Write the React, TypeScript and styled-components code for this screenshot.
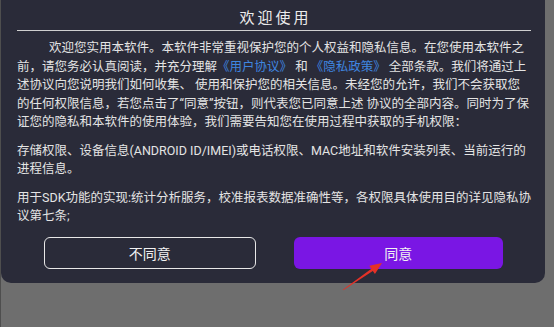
import React from "react";
import styled, { createGlobalStyle } from "styled-components";

const Global = createGlobalStyle`
  html, body { margin: 0; padding: 0; background: #6e6e6e; }
  body {
    width: 554px;
    height: 327px;
    overflow: hidden;
    font-family: Roboto, "Noto Sans CJK SC", sans-serif;
  }
`;

const Stage = styled.div`
  position: relative;
  width: 554px;
  height: 327px;
  box-sizing: border-box;
  padding-left: 1px;
  background: #6e6e6e;
  border-left: 1px solid #4e4e4e;
`;

const Dialog = styled.div`
  width: 544px;
  height: 283px;
  margin-left: -1px;
  box-sizing: border-box;
  background: #2a2b39;
  border-radius: 0 0 10px 10px;
  padding: 0 14px 14px 16px;
  display: flex;
  flex-direction: column;
`;

const Header = styled.div`
  height: 31px;
  padding-top: 2px;
  box-sizing: border-box;
  border-bottom: 1px solid #cfcfcf;
  display: flex;
  align-items: center;
  justify-content: center;
`;

const Title = styled.h1`
  margin: 0;
  padding-left: 3px;
  font-size: 15px;
  font-weight: 400;
  letter-spacing: 3px;
  color: #ececec;
`;

const Body = styled.div`
  padding-top: 8px;
  display: flex;
  flex-direction: column;
  gap: 10px;
`;

const Para = styled.p<{ $indent?: boolean }>`
  margin: 0;
  font-size: 12.5px;
  line-height: 18.5px;
  color: #e4e4e4;
  white-space: nowrap;
  text-indent: ${(p) => (p.$indent ? "32px" : "0")};
`;

const Link = styled.span`
  color: #3f86e0;
`;

const Actions = styled.div`
  margin-top: auto;
  padding: 0 28px 0 27px;
  display: flex;
  gap: 38px;
`;

const Button = styled.button<{ $primary?: boolean }>`
  flex: 1;
  height: 32px;
  box-sizing: border-box;
  border-radius: 6px;
  font-family: Roboto, "Noto Sans CJK SC", sans-serif;
  font-size: 14px;
  color: #f2f2f2;
  background: ${(p) => (p.$primary ? "#7a16e4" : "transparent")};
  border: ${(p) => (p.$primary ? "none" : "1.5px solid #e8e8e8")};
  padding: 0;
  cursor: pointer;
`;

const Arrow = styled.svg`
  position: absolute;
  left: 330px;
  top: 255px;
  width: 60px;
  height: 40px;
  pointer-events: none;
`;

export default function App() {
  return (
    <Stage>
      <Global />
      <Dialog>
        <Header>
          <Title>欢迎使用</Title>
        </Header>
        <Body>
          <Para $indent>
            欢迎您实用本软件。本软件非常重视保护您的个人权益和隐私信息。在您使用本软件之
            <br />
            前，请您务必认真阅读，并充分理解<Link>《用户协议》</Link> 和 <Link>《隐私政策》</Link> 全部条款。我们将通过上
            <br />
            述协议向您说明我们如何收集、 使用和保护您的相关信息。未经您的允许，我们不会获取您
            <br />
            的任何权限信息，若您点击了“同意”按钮，则代表您已同意上述 协议的全部内容。同时为了保
            <br />
            证您的隐私和本软件的使用体验，我们需要告知您在使用过程中获取的手机权限：
          </Para>
          <Para>
            存储权限、设备信息(ANDROID ID/IMEI)或电话权限、MAC地址和软件安装列表、当前运行的
            <br />
            进程信息。
          </Para>
          <Para>
            用于SDK功能的实现:统计分析服务，校准报表数据准确性等，各权限具体使用目的详见隐私协
            <br />
            议第七条;
          </Para>
        </Body>
        <Actions>
          <Button>不同意</Button>
          <Button $primary>同意</Button>
        </Actions>
      </Dialog>
      <Arrow viewBox="0 0 60 40">
        <polygon
          points="51,8 43.95,18.9 41.8,15.9 12.2,35.25 11.8,34.75 40.4,13.7 38.25,10.7"
          fill="#e53127"
        />
      </Arrow>
    </Stage>
  );
}
